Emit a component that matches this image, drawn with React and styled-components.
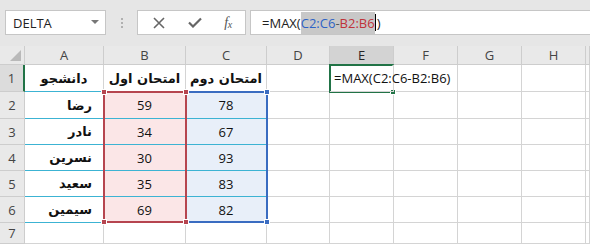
import React from "react";
import styled, { createGlobalStyle } from "styled-components";

const Global = createGlobalStyle`
  html, body { margin: 0; padding: 0; background: #fff; overflow: hidden; }
  * { box-sizing: border-box; }
`;

const Page = styled.div`
  width: 590px;
  height: 244px;
  overflow: hidden;
  font-family: "Open Sans", "DejaVu Sans", sans-serif;
  background: #fff;
`;

const Toolbar = styled.div`
  height: 46px;
  background: #e6e6e6;
  display: flex;
  align-items: flex-start;
  padding: 10px 0 0 5px;
`;

const NameBox = styled.div`
  width: 101px;
  height: 25px;
  background: #fff;
  border: 1px solid #c6c6c6;
  display: flex;
  align-items: center;
  justify-content: space-between;
  padding: 0 6px 0 7px;
  font-size: 13px;
  color: #222;
`;

const Caret = styled.span`
  width: 0;
  height: 0;
  border-left: 4px solid transparent;
  border-right: 4px solid transparent;
  border-top: 4px solid #777;
  margin-bottom: 2px;
`;

const Grip = styled.div`
  width: 31px;
  height: 25px;
  display: flex;
  flex-direction: column;
  align-items: center;
  justify-content: center;
  gap: 2px;
  span { width: 2px; height: 2px; background: #b0b0b0; }
`;

const FxBox = styled.div`
  width: 109px;
  height: 25px;
  background: #fff;
  border: 1px solid #c6c6c6;
  display: flex;
  align-items: center;
  justify-content: space-around;
  padding: 0 2px 0 4px;
  color: #6a6a6a;
`;

const FxLabel = styled.span`
  font-family: "Liberation Serif", serif;
  font-style: italic;
  font-size: 14px;
  color: #555;
  letter-spacing: -0.5px;
  sub { font-size: 10px; vertical-align: -1px; }
`;

const FormulaBar = styled.div`
  flex: 1;
  margin-left: 4px;
  height: 25px;
  background: #fff;
  border: 1px solid #c6c6c6;
  border-right: none;
  display: flex;
  align-items: center;
  padding-left: 11px;
  font-size: 13px;
  color: #222;
  white-space: nowrap;
`;

const Sel = styled.span`
  background: #c8c8c8;
  padding: 2px 0;
`;

const Ref = styled.span`
  color: ${(p) => p.$color};
`;

const Cursor = styled.span`
  display: inline-block;
  width: 1px;
  height: 17px;
  background: #000;
  vertical-align: middle;
  margin: 0 1px 0 0;
`;

const Sheet = styled.div`
  display: grid;
  grid-template-columns: 25px 79px 82px 81px 63px 64px 64px 64px 64px 1fr;
  grid-template-rows: 19px 27px 27px 26px 26px 26px 26px 1fr;
  height: 198px;
  background: #fff;
`;

const Placed = styled.div`
  grid-row: ${(p) => p.$r};
  grid-column: ${(p) => p.$c};
`;

const ColHead = styled(Placed)`
  background: ${(p) => (p.$active ? "#d3d3d3" : "#e9e9e9")};
  border-right: 1px solid #cdcdcd;
  border-bottom: 1px solid ${(p) => (p.$active ? "#217346" : "#cdcdcd")};
  display: flex;
  align-items: center;
  justify-content: center;
  font-size: 13px;
  color: ${(p) => (p.$active ? "#262626" : "#444")};
`;

const Corner = styled(ColHead)`
  position: relative;
  &::after {
    content: "";
    position: absolute;
    right: 3px;
    bottom: 3px;
    width: 0;
    height: 0;
    border-left: 11px solid transparent;
    border-bottom: 11px solid #b9b9b9;
  }
`;

const RowHead = styled(Placed)`
  background: ${(p) => (p.$active ? "#dcdcdc" : "#e9e9e9")};
  border-right: ${(p) => (p.$active ? "2px solid #217346" : "1px solid #cdcdcd")};
  border-bottom: 1px solid #cdcdcd;
  display: flex;
  align-items: center;
  justify-content: center;
  font-size: 13px;
  color: #444;
`;

const Cell = styled(Placed)`
  border-right: 1px solid #d4d4d4;
  border-bottom: 1px solid ${(p) => p.$hline || "#d4d4d4"};
  background: ${(p) => p.$bg || "transparent"};
  display: flex;
  align-items: center;
  justify-content: ${(p) => p.$align || "center"};
  padding: ${(p) => (p.$align === "flex-end" ? "0 11px 0 0" : p.$align === "flex-start" ? "0 0 0 4px" : "0")};
  font-size: 13px;
  font-weight: ${(p) => (p.$bold ? 700 : 400)};
  font-family: ${(p) => (p.$bold ? '"DejaVu Sans", sans-serif' : '"Open Sans", sans-serif')};
  color: #111;
  white-space: nowrap;
  overflow: visible;
  min-width: 0;
  position: relative;
  z-index: ${(p) => (p.$over ? 4 : "auto")};
`;

const Range = styled(Placed)`
  border: 2px solid ${(p) => p.$color};
  margin: -1px -1px 0 -1px;
  position: relative;
  pointer-events: none;
  z-index: ${(p) => p.$z};
`;

const Handle = styled.span`
  position: absolute;
  width: 6px;
  height: 6px;
  background: ${(p) => p.$color};
  border: 1px solid #fff;
  ${(p) => (p.$top ? "top: -4px;" : "bottom: -4px;")}
  ${(p) => (p.$left ? "left: -4px;" : "right: -4px;")}
`;

const Selection = styled(Placed)`
  border: 2px solid #217346;
  border-right-color: transparent;
  margin: -1px 0 -1px -1px;
  position: relative;
  pointer-events: none;
  z-index: 3;
`;

const FillHandle = styled.span`
  position: absolute;
  right: -4px;
  bottom: -4px;
  width: 6px;
  height: 6px;
  background: #217346;
  border: 1px solid #fff;
`;

const CYAN = "#3cb3d3";
const PINK = "#fbe6e7";
const BLUE = "#e8eff9";

const data = [
  ["دانشجو", "امتحان اول", "امتحان دوم"],
  ["رضا", 59, 78],
  ["نادر", 34, 67],
  ["نسرین", 30, 93],
  ["سعید", 35, 83],
  ["سیمین", 69, 82],
  [null, null, null],
];

const cols = ["A", "B", "C", "D", "E", "F", "G", "H", ""];

function XIcon() {
  return (
    <svg width="12" height="12" viewBox="0 0 12 12">
      <path d="M1 1 L11 11 M11 1 L1 11" stroke="#666" strokeWidth="1.6" fill="none" />
    </svg>
  );
}

function CheckIcon() {
  return (
    <svg width="14" height="11" viewBox="0 0 14 11">
      <path d="M1 5.5 L5 9.5 L13 1.5" stroke="#666" strokeWidth="2.2" fill="none" />
    </svg>
  );
}

export default function App() {
  return (
    <Page>
      <Global />
      <Toolbar>
        <NameBox>
          <span>DELTA</span>
          <Caret />
        </NameBox>
        <Grip>
          <span />
          <span />
          <span />
        </Grip>
        <FxBox>
          <XIcon />
          <CheckIcon />
          <FxLabel>
            f<sub>x</sub>
          </FxLabel>
        </FxBox>
        <FormulaBar>
          =MAX(
          <Sel>
            <Ref $color="#2e63c6">C2:C6</Ref>
            <Ref $color="#555">-</Ref>
            <Ref $color="#c0333a">B2:B6</Ref>
          </Sel>
          <Cursor />)
        </FormulaBar>
      </Toolbar>
      <Sheet>
        <Corner $r={1} $c={1} />
        {cols.map((c, i) => (
          <ColHead key={"h" + i} $r={1} $c={i + 2} $active={c === "E"}>
            {c}
          </ColHead>
        ))}

        {data.map(([name, b, c], i) => {
          const r = i + 2;
          const isHeader = i === 0;
          const inData = i >= 1 && i <= 5;
          const last = i === 6;
          return (
            <React.Fragment key={"r" + i}>
              <RowHead $r={r} $c={1} $active={isHeader}>
                {i + 1}
              </RowHead>
              <Cell $r={r} $c={2} $bold $align={isHeader ? "center" : "flex-end"} $hline={last ? undefined : CYAN}>
                {name}
              </Cell>
              <Cell $r={r} $c={3} $bold={isHeader} $bg={inData ? PINK : undefined} $hline={inData ? CYAN : undefined}>
                {b}
              </Cell>
              <Cell $r={r} $c={4} $bold={isHeader} $bg={inData ? BLUE : undefined} $hline={inData ? CYAN : undefined}>
                {c}
              </Cell>
              {[5, 6, 7, 8, 9, 10].map((col) => {
                const formula = isHeader && col === 6;
                return (
                  <Cell key={col} $r={r} $c={col} $align={formula ? "flex-start" : undefined} $over={formula}>
                    {formula ? "=MAX(C2:C6-B2:B6)" : null}
                  </Cell>
                );
              })}
            </React.Fragment>
          );
        })}

        <Range $c="4" $r="3 / 8" $color="#3a6cc1" $z={1}>
          <Handle $color="#3a6cc1" $top />
          <Handle $color="#3a6cc1" />
        </Range>
        <Range $c="3" $r="3 / 8" $color="#b6454f" $z={2}>
          <Handle $color="#b6454f" $top $left />
          <Handle $color="#b6454f" $top />
          <Handle $color="#b6454f" $left />
          <Handle $color="#b6454f" />
        </Range>
        <Selection $c={6} $r={2}>
          <FillHandle />
        </Selection>
      </Sheet>
    </Page>
  );
}
